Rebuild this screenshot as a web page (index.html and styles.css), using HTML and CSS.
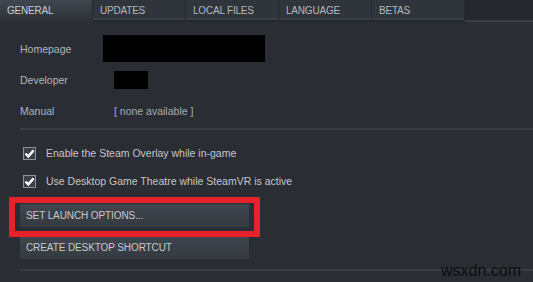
FILE: index.html
```html
<!DOCTYPE html>
<html lang="en">
<head>
  <meta charset="UTF-8" />
  <title>Properties - General</title>
  <link rel="stylesheet" href="styles.css">
</head>
<body>
  <div class="tabs">
    <div class="tab active">GENERAL</div>
    <div class="tab">UPDATES</div>
    <div class="tab">LOCAL FILES</div>
    <div class="tab">LANGUAGE</div>
    <div class="tab">BETAS</div>
    <div class="tab-fill"></div>
  </div>

  <div class="content">
    <div class="info-row">
      <span class="label">Homepage</span>
      <span class="redact redact-wide"></span>
    </div>
    <div class="info-row">
      <span class="label">Developer</span>
      <span class="redact redact-small"></span>
    </div>
    <div class="info-row">
      <span class="label">Manual</span>
      <span class="value">[ none available ]</span>
    </div>

    <div class="divider"></div>

    <label class="check-row">
      <span class="checkbox">
        <svg width="11" height="11" viewBox="0 0 11 11"><path d="M1.5 5.5 L4.3 8.4 L9.6 2.4" fill="none" stroke="#fff" stroke-width="2.4"/></svg>
      </span>
      Enable the Steam Overlay while in-game
    </label>
    <label class="check-row">
      <span class="checkbox">
        <svg width="11" height="11" viewBox="0 0 11 11"><path d="M1.5 5.5 L4.3 8.4 L9.6 2.4" fill="none" stroke="#fff" stroke-width="2.4"/></svg>
      </span>
      Use Desktop Game Theatre while SteamVR is active
    </label>

    <div class="buttons">
      <div class="highlight">
        <button class="btn">SET LAUNCH OPTIONS...</button>
      </div>
      <button class="btn">CREATE DESKTOP SHORTCUT</button>
    </div>

    <div class="divider bottom"></div>
  </div>

  <div class="watermark">wsxdn.com</div>
</body>
</html>
```

FILE: styles.css
```css
body {
  margin: 0;
  background-color: #2a2d33;
  font-family: Arial, "Liberation Sans", sans-serif;
  height: 282px;
  overflow: hidden;
  position: relative;
}

.tabs {
  display: flex;
  height: 22px;
  gap: 1px;
  background-color: #26292e;
}

.tab {
  width: 92px;
  height: 20px;
  padding-left: 7px;
  box-sizing: border-box;
  background-color: #30343b;
  border-bottom: 2px solid #3a3f47;
  color: #b4b9be;
  font-size: 10px;
  line-height: 21px;
  letter-spacing: -0.2px;
}

.tab.active {
  height: 22px;
  border-bottom: none;
  background: linear-gradient(#41474f, #2c3036);
  color: #c9ced3;
}

.tab-fill {
  flex: 1;
  border-bottom: 2px solid #3a3f47;
  height: 20px;
  background-color: #24272c;
}

.content {
  padding: 11px 0 0 20px;
}

.info-row {
  display: flex;
  align-items: center;
  height: 31px;
}

.label {
  width: 94px;
  color: #b1b6bc;
  font-size: 10.5px;
}

.value {
  color: #a8adb3;
  font-size: 10.5px;
}

.redact {
  background-color: #000;
  display: block;
}

.redact-wide {
  width: 162px;
  height: 27px;
  margin-left: -11px;
}

.redact-small {
  width: 34px;
  height: 18px;
}

.divider {
  height: 2px;
  background-color: #383c44;
  margin: 2px 0 9px;
}

.divider.bottom {
  margin: 10px 0 0;
}

.check-row {
  display: flex;
  align-items: center;
  height: 28px;
  padding-left: 3px;
  gap: 10px;
  color: #c3c7cc;
  font-size: 10.5px;
}

.checkbox {
  width: 11px;
  height: 11px;
  border: 1px solid #8d939a;
  background-color: #3b3f46;
  display: flex;
}

.buttons {
  display: flex;
  flex-direction: column;
  gap: 9px;
  margin-top: 9px;
}

.highlight {
  position: relative;
}

.highlight::after {
  content: "";
  position: absolute;
  top: -7px;
  left: -11px;
  width: 251px;
  height: 40px;
  box-sizing: border-box;
  border: 6px solid #e5222c;
}

.btn {
  display: block;
  width: 229px;
  height: 23px;
  padding: 0 0 0 6px;
  border: none;
  background: linear-gradient(#40464e, #353a41);
  color: #c6cacf;
  font-family: Arial, "Liberation Sans", sans-serif;
  font-size: 10px;
  text-align: left;
  letter-spacing: -0.1px;
}

.watermark {
  position: absolute;
  right: 12px;
  bottom: 2px;
  color: #0d0d0d;
  font-family: Arial, "Liberation Sans", sans-serif;
  font-size: 16px;
}
```
